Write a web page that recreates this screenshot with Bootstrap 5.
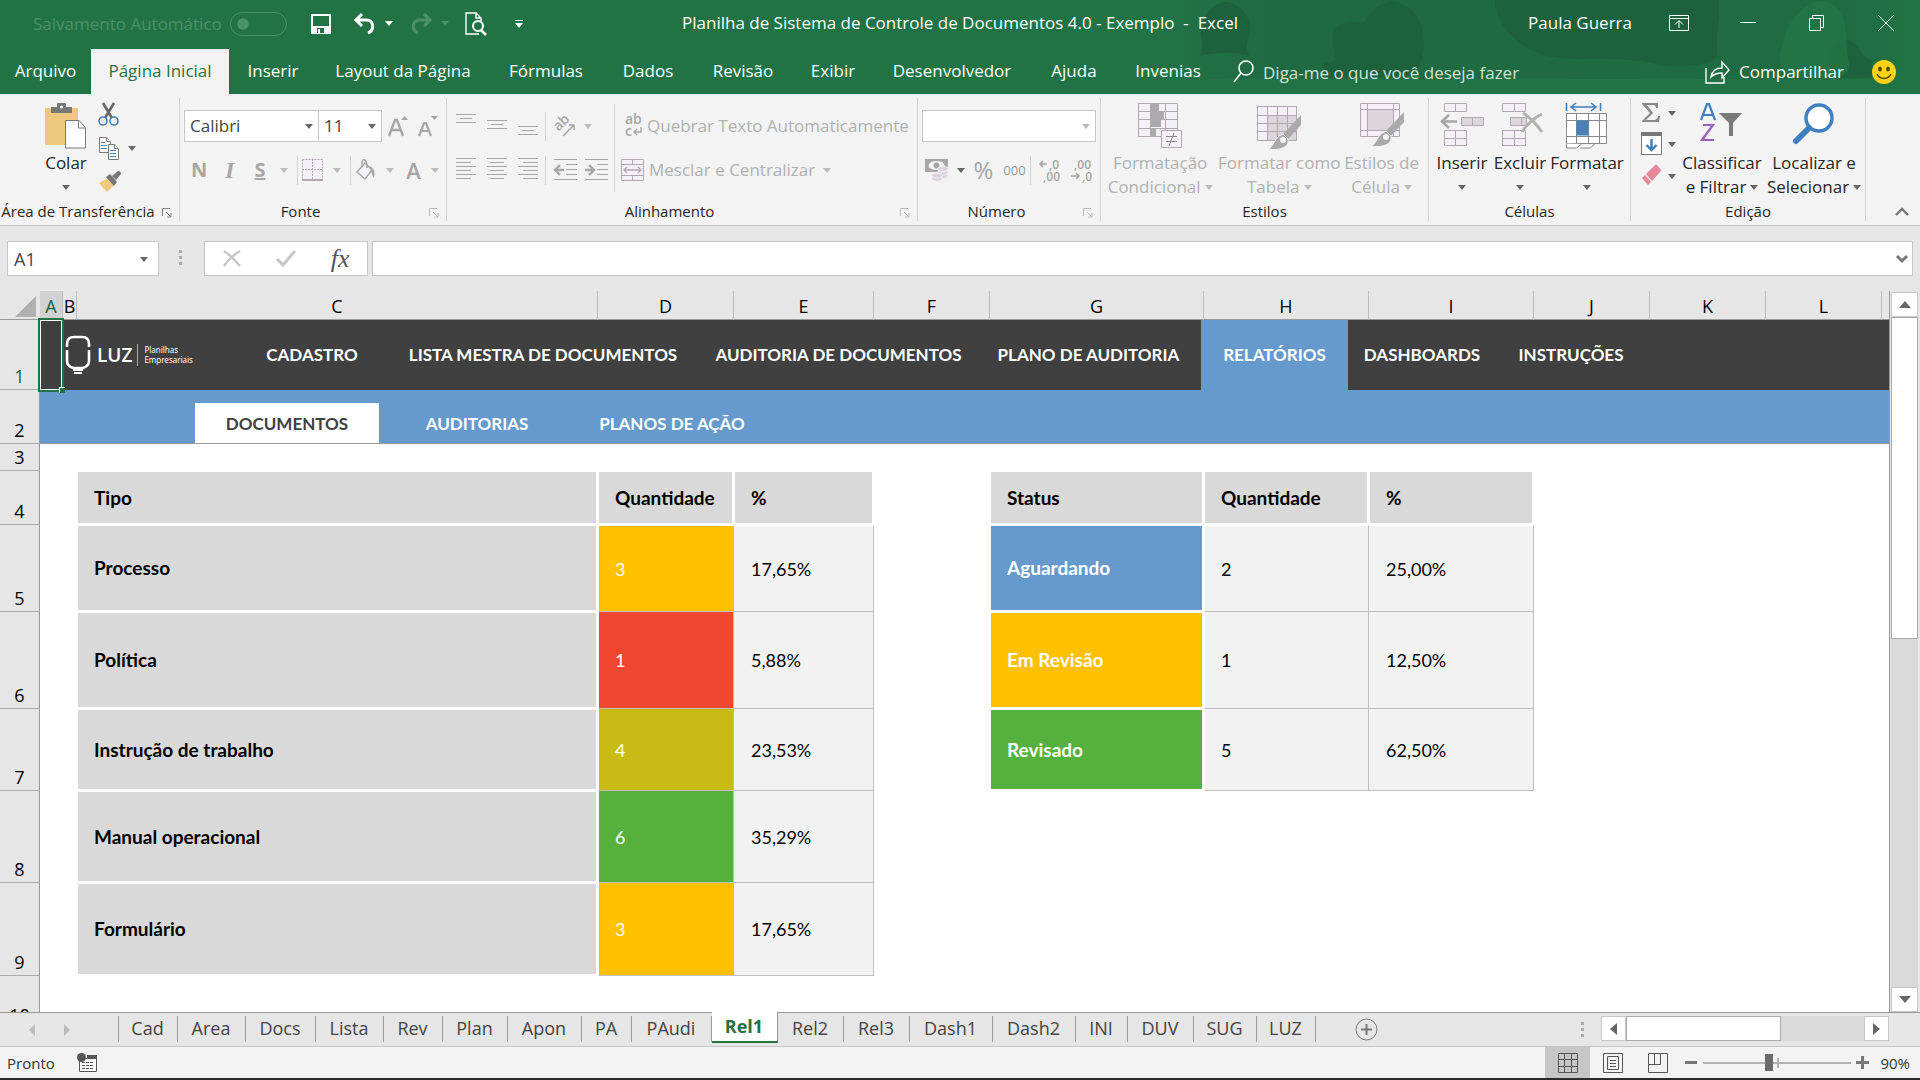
<!DOCTYPE html>
<html lang="pt-BR">
<head>
<meta charset="utf-8">
<meta name="viewport" content="width=device-width, initial-scale=1">
<title>Planilha de Sistema de Controle de Documentos 4.0 - Exemplo - Excel</title>
<link href="https://cdn.jsdelivr.net/npm/bootstrap@5.3.0/dist/css/bootstrap.min.css" rel="stylesheet">
<style>
:root{--xl:#217346;--chrome:#e6e6e6;--ribbon:#f3f3f3;--line:#c6c6c6;--grid:#999;--off:#b1b1b1;--blue:#6699cc}
body{font-family:"Open Sans","Noto Sans",sans-serif;font-size:17px;line-height:24px;color:#262626;background:var(--chrome)}
button,input,select{font-family:inherit}
svg{display:block;flex:none;overflow:visible}
a{text-decoration:none;color:inherit}
.plain{background:none;border:0;padding:0;color:inherit;display:flex;align-items:center;justify-content:center}
.caret{width:0;height:0;border:4px solid transparent;border-top:5px solid #666;border-bottom:0;display:inline-block;flex:none}
.dim{color:var(--off)}
.dim .caret,.caret.dim{border-top-color:#bbb}
.dim .caret.strong{border-top-color:#666}
.caret.white{border-top-color:#fff}
.caret.green{border-top-color:#4d9168}

/* title bar */
.top-area{background:var(--xl);color:#fff;position:relative}
.backdrop{position:absolute;right:0;top:0}
.title-row{height:49px;display:grid;grid-template-columns:1fr auto 1fr;position:relative}
.quick{padding:0 0 2px 33px}
.faded{color:#4d9168}
.switch-pill{appearance:none;width:57px;height:24px;border:1px solid #4d9168;border-radius:12px;margin:0;background:radial-gradient(circle at 12px 11px,#4d9168 5px,transparent 6px)}
.undo-btn{margin-left:22px}
.ribbon-opt{width:61px}
.win-btn{width:69px;height:40px}
.menu-row{height:45px;position:relative}
.menu-tabs{display:grid;grid-template-columns:91px 138px 88px 172px 114px 90px 100px 80px 158px 86px 102px}
.menu-tabs a{display:flex;align-items:center;justify-content:center;padding-bottom:1px}
.menu-tabs a.on{background:var(--ribbon);color:var(--xl)}
.ask-box{gap:9px;padding:2px 0 0 14px}
.ask{background:none;border:0;color:#d0e3d8;width:300px;padding:0;outline:0}
.ask::placeholder{color:#d0e3d8;opacity:1}
.smile{margin-left:28px}

/* ribbon */
.ribbon{height:132px;background:var(--ribbon);border-bottom:1px solid var(--line)}
.grp{position:relative;display:flex;flex-direction:column;padding-top:4px;border-right:1px solid #d2d2d2;margin:4px 0;flex:none}
.g-clip{width:180px}.g-font{width:267px}.g-align{width:471px}.g-num{width:183px}.g-style{width:328px}.g-cells{width:202px}.g-edit{width:235px}
.grp-main{height:98px;display:flex}
.grp-name{font-size:15px;line-height:20px;text-align:center;white-space:nowrap;padding-top:2px}
.grp-name.with-launch{padding-right:25px}
.g-clip .grp-name{width:156px}
.launch{position:absolute;right:7px;bottom:3px}
.big{flex-direction:column;justify-content:flex-start;white-space:nowrap}
.big .pic{height:49px;display:flex;align-items:flex-start;padding-top:1px}
.big .caret{margin-top:10px}
.big .lbl .caret{margin:0 0 3px 4px}
.w-58{width:58px}.w-76{width:76px}.w-86{width:86px}.w-92{width:92px}.w-120{width:120px}
.g-style .grp-main{padding-right:4px}
.paste{width:90px;padding-left:42px}
.clip-col{padding:1px 0 0 8px;gap:11px}
.edit-col{width:45px;padding:1px 0 0 10px;gap:9px}
.edit-col .plain{gap:6px;justify-content:flex-start}
.tool{width:31px;height:30px}
.slim{width:22px;height:30px;display:flex;align-items:center;justify-content:center}
.sep{width:1px;height:29px;background:#d2d2d2;flex:none}
.sep.tall{height:88px;margin-top:2px}
.tool-row{display:flex;align-items:center;height:46px;margin-top:1px}
.tool-row + .tool-row{height:42px;margin-top:0}
.indent-4{padding-left:4px}
.align-col{width:98px;padding-left:3px}
.turn-col{width:69px}
.wrap-col{padding-left:6px}
.pick{appearance:none;height:32px;border:1px solid var(--line);background:#fff url("data:image/svg+xml,%3Csvg xmlns='http://www.w3.org/2000/svg' width='8' height='5'%3E%3Cpath d='M0 0h8L4 5z' fill='%23666'/%3E%3C/svg%3E") no-repeat right 5px top 13px;border-radius:0;padding:0 5px;color:#444;font-size:17px;line-height:24px;outline:0}
.pick-font{width:135px}
.pick-size{width:64px;margin-left:-1px}
.pick-num{width:174px;background-image:url("data:image/svg+xml,%3Csvg xmlns='http://www.w3.org/2000/svg' width='8' height='5'%3E%3Cpath d='M0 0h8L4 5z' fill='%23bbb'/%3E%3C/svg%3E")}
.letter{font-weight:700;font-size:20px;color:#a6a6a6}
.letter.slanted{font-family:"Liberation Serif",serif;font-size:24px;font-style:italic}
.letter.colored{font-size:22px;font-weight:600}
.money{width:46px;gap:7px}
.percent{font-size:24px;color:#a6a6a6}
.zeros{font-size:13px;color:#999}
.collapse-btn{padding:0 11px 9px}

/* formula bar */
.fbar{height:65px;padding:15px 7px 0}
.name-box{height:35px;width:152px;padding-left:6px;font-size:18px;background-position:right 10px top 15px}
.fbox{height:35px;background:#fff;border:1px solid var(--line)}
.ftools{width:164px}
.finput{border:0;outline:0;background:none;height:33px}
.fx{font:italic 400 26px/24px "Liberation Serif",serif;color:#555}
.dots{width:3px;height:15px;background:repeating-linear-gradient(#aaa 0 3px,transparent 3px 6px)}
.fbar .dots{margin:9px 22px 0 20px}

/* sheet */
.sheet-area{flex:1 1 0;min-height:0}
.pane{overflow:hidden;min-width:0;border-right:1px solid var(--grid);background:#fff}
.sheet{table-layout:fixed;width:100%;border-collapse:separate;border-spacing:0;font-family:Lato,"Open Sans",sans-serif;font-size:18px;line-height:24px;color:#000}
.k-num{width:40px}.k-a{width:23px}.k-b{width:14px}.k-c{width:521px}.k-d{width:136px}.k-e{width:140px}.k-f{width:116px}.k-g{width:214px}.k-h{width:165px}
.sheet td,.sheet th{padding:0}
.sheet thead th{height:29px;padding-top:2px;background:var(--chrome);border-bottom:1px solid var(--grid);border-right:1px solid #bdbdbd;text-align:center;font-weight:400;font-family:"Open Sans",sans-serif;font-size:18px}
.sheet thead th.sel,.sheet tbody th.sel{background:#d2d2d2;color:#1c5f3a}
.sheet thead th:first-child,.sheet thead th:last-child{border-right:0}
.sheet tbody th.num{background:var(--chrome);border-right:1px solid var(--grid);border-bottom:1px solid #ababab;padding-bottom:2px;font-weight:400;text-align:center;vertical-align:bottom;font-family:"Open Sans",sans-serif;line-height:22px}
.r1{height:70px}.r2{height:54px}.r3{height:27px}.r5{height:87px}.r6{height:97px}.r7{height:82px}.r8{height:92px}.r9{height:93px}.r10{height:53px}
.sheet .hd,.sheet .kind{border:solid #fff;border-width:1px 2px 2px 1px;background:#d9d9d9;font-weight:700;font-size:19px;padding-left:16px;text-align:left}
.sheet .qty,.sheet .val,.sheet .cnt{border:solid #bfbfbf;border-width:0 1px 1px 0;background:#f2f2f2;padding-left:17px}
.sheet .qty{border-left:1px solid #fff;color:#fff;padding-left:16px}
.sheet .cnt{border-left:1px solid #fff;padding-left:16px}
.sheet .first{border-top:1px solid #fff}
.sheet .c-amber{background:#ffc000}.sheet .c-red{background:#f14730}.sheet .c-olive{background:#c8bc14}.sheet .c-green{background:#56b03e}.sheet .c-blue{background:var(--blue)}
.sheet .st{color:#fff}
.cell-a1{background:#404040;position:relative}
.cursor-box{position:absolute;left:-2px;top:-2px;right:-1px;bottom:-2px;border:2px solid var(--xl);outline:1px solid #fff;outline-offset:-3px;z-index:2}
.cursor-box::after{content:"";position:absolute;right:-3px;bottom:-3px;width:6px;height:6px;background:var(--xl);border:solid #fff;border-width:1px 0 0 1px}
.nav-dark{background:#404040;color:#fff;font-weight:700;font-size:17px}
.nav-main{display:grid;grid-template-columns:176px 146px 316px 275px 225px 147px 148px 150px;height:70px}
.nav-main a,.nav-sub a{display:flex;align-items:center;justify-content:center;white-space:nowrap}
.nav-main a.on{background:var(--blue)}
.sheet .nav-blue{background:var(--blue);color:#fff;font-weight:700;font-size:17px;border-bottom:1px solid var(--grid);vertical-align:bottom}
.nav-sub{display:grid;grid-template-columns:184px 196px 194px;height:40px;padding-left:155px}
.nav-sub a{padding-top:2px}
.nav-sub a.on{background:#fff;color:#404040}
.brand{gap:5px;padding-left:2px}
.brand-word{font-family:"Open Sans",sans-serif;font-weight:600;font-size:19px;line-height:22px}
.brand-sub{font-family:"Noto Sans","Open Sans",sans-serif;font-weight:400;font-size:8px;line-height:10px;border-left:1px solid #aaa;padding:1px 0 1px 6px}

/* scroll bars */
.vscroll{width:30px;flex:none;padding:1px 2px 0 1px}
.sb-btn{background:#fff;border:1px solid var(--line);width:100%;height:25px}
.sb-thumb{background:#fff;border:1px solid #ababab}
.vtrack{flex:1;background:#dadada}
.vtrack .sb-thumb{height:48%}
.hscroll{width:288px;height:25px;margin:3px 31px 0 17px}
.hscroll .sb-btn{width:25px}
.htrack{flex:1;background:#dadada}
.htrack .sb-thumb{width:65%;height:25px}

/* sheet tabs and status bar */
.tabs-row{height:35px;border-top:1px solid var(--grid);border-bottom:1px solid var(--line);font-size:18px;color:#444}
.tabs-row .dots{margin-top:9px}
.tab-prev{width:64px}
.tab-next{width:54px;justify-content:flex-start}
.add-tab{margin-left:39px}
.tabs{display:grid;grid-template-columns:59px 68px 70px 68px 59px 65px 74px 50px 80px 66px 66px 66px 83px 83px 52px 66px 63px 59px;border-left:1px solid var(--grid);height:26px;margin-top:3px}
.tabs a{display:flex;align-items:center;justify-content:center;border-right:1px solid var(--grid);padding:0 1px 2px 0;line-height:22px}
.tabs a.on{background:#fff;color:var(--xl);font-weight:700;margin:-4px 0 -1px;border-bottom:2px solid var(--xl);padding-bottom:1px}
.status{height:31px;background:var(--ribbon);font-size:15px;color:#333}
.ready{padding:0 22px 0 7px}
.view-side{padding-right:10px}
.view-btn{width:45px;height:31px}
.view-btn.on{background:#c6c6c6}
.zoom-out{margin:0 6px 0 5px}
.zoom-in{margin:0 11px 0 5px}
.zoomer{appearance:none;width:148px;height:18px;margin:0;background:linear-gradient(#b1b1b1,#b1b1b1) 0 8px/100% 2px no-repeat,linear-gradient(#b1b1b1,#b1b1b1) 74px 4px/2px 10px no-repeat}
.zoomer::-webkit-slider-thumb{appearance:none;width:8px;height:17px;background:#6b6b6b}
.taskline{height:2px;background:#2b2b2b}
</style>
</head>
<body class="vh-100 d-flex flex-column overflow-hidden">

<header class="top-area flex-shrink-0">
  <svg class="backdrop" width="760" height="79" viewBox="0 0 760 79">
    <defs><linearGradient id="fade"><stop offset="0" stop-color="#1f6a41" stop-opacity="0"/><stop offset=".16" stop-color="#1f6a41"/><stop offset=".9" stop-color="#206c42"/><stop offset="1" stop-color="#217346"/></linearGradient></defs>
    <rect width="760" height="79" fill="url(#fade)"/>
    <g fill="#1e623d">
      <path d="M40 56c6-12-2-18 2-32C46 8 60 2 66 2s22 6 24 24c1 14-8 18 0 30-12-4-36-4-50 0z"/>
      <path d="M176 60c-8-30-2-36 14-38 8 0 12 2 16-2 4-10 18-20 30-18 22 4 28 26 28 42s-6 26-14 34h-80c-4-6-8-10-8-14z"/>
      <path d="M335 0h224c2 18-4 36-2 50 4 16-30 18-60 14-40-10-90 0-116-10-24-8-46-30-46-54z"/>
      <path d="M668 64c-4-18 10-26 20-24 12 4 12 18 24 20v18h-32z"/>
    </g>
    <path d="M624 40c4-22 30-48 48-36s12 34 16 54-6 20-40 20-30-20-24-38z" fill="#237849" opacity=".7"/>
  </svg>
  <div class="title-row align-items-center">
    <div class="quick d-flex align-items-center">
      <label class="faded text-nowrap" for="autosave">Salvamento Automático</label>
      <input class="switch-pill ms-2" type="checkbox" id="autosave" disabled>
      <button class="plain ms-4" aria-label="Salvar"><svg width="20" height="20" fill="none"><path d="M1 1h18v18H1z" stroke="#fff" stroke-width="2"/><path d="M2 12h16v7H2z" fill="#f3f3f3"/><path d="M6 14h7v5H6z" fill="#217346"/><path d="M7 15h2v4H7z" fill="#fff"/></svg></button>
      <button class="plain undo-btn" aria-label="Desfazer"><svg width="24" height="22" fill="none" stroke="#fff" stroke-width="3"><path d="M9 1L3 7l6 6M3 7h10c8 0 9 10 2 13"/></svg></button>
      <span class="caret white ms-2"></span>
      <button class="plain ms-3" aria-label="Refazer"><svg width="24" height="22" fill="none" stroke="#4d9168" stroke-width="3"><path d="M15 1l6 6-6 6M21 7H11C3 7 2 17 9 20"/></svg></button>
      <span class="caret green ms-2"></span>
      <button class="plain ms-3" aria-label="Visualizar impressão"><svg width="22" height="24" fill="none" stroke="#fff" stroke-width="1.4"><path d="M16 9V6l-5-5H1v21h13M11 1v5h5"/><circle cx="13" cy="14" r="5" stroke-width="2"/><path d="M16 18l5 5" stroke-width="2.5"/></svg></button>
      <button class="plain ms-4" aria-label="Personalizar"><svg class="ms-1" width="8" height="8" fill="#fff"><path d="M0 0h8v1H0zM0 3h8L4 8z"/></svg></button>
    </div>
    <div class="text-nowrap pb-1">Planilha de Sistema de Controle de Documentos 4.0 - Exemplo &nbsp;-&nbsp; Excel</div>
    <div class="d-flex align-items-center justify-content-end pb-1">
      <span class="me-3">Paula Guerra</span>
      <button class="plain ribbon-opt" aria-label="Opções da faixa"><svg width="20" height="16" fill="none" stroke="#fff"><path d="M.5.5h19v15H.5zM.5 3.500h19M10 13V6M6 9.500l4-4 4 4"/></svg></button>
      <button class="plain win-btn ms-1" aria-label="Minimizar"><svg width="16" height="2"><path d="M0 0h16v1H0z" fill="#fff"/></svg></button>
      <button class="plain win-btn" aria-label="Restaurar"><svg width="16" height="16" fill="none" stroke="#fff"><path d="M.5 3.500h11v12H.5zM3.500 3V.5h11v12H12"/></svg></button>
      <button class="plain win-btn" aria-label="Fechar"><svg width="16" height="16" stroke="#fff"><path d="M0 0l16 16M16 0L0 16"/></svg></button>
    </div>
  </div>
  <div class="menu-row d-flex">
    <nav class="menu-tabs text-nowrap">
      <a href="#">Arquivo</a><a href="#" class="on">Página Inicial</a><a href="#">Inserir</a><a href="#">Layout da Página</a><a href="#">Fórmulas</a><a href="#">Dados</a><a href="#">Revisão</a><a href="#">Exibir</a><a href="#">Desenvolvedor</a><a href="#">Ajuda</a><a href="#">Invenias</a>
    </nav>
    <label class="ask-box d-flex align-items-center"><svg width="21" height="23" fill="none" stroke="#fff" stroke-width="1.600"><circle cx="13" cy="7" r="7"/><path d="M8 12l-7 9"/></svg><input class="ask" type="text" placeholder="Diga-me o que você deseja fazer" aria-label="Diga-me"></label>
    <div class="ms-auto d-flex align-items-center pe-4">
      <button class="plain gap-2"><svg width="26" height="24" fill="none" stroke="#fff" stroke-width="1.400"><path d="M1 8v15h18v-6M6 17c1-6 5-9 11-9V2l7 8-7 8v-5c-5 0-8 1-11 4z"/></svg><span>Compartilhar</span></button>
      <svg class="smile" width="24" height="24"><circle cx="12" cy="12" r="12" fill="#fcd116"/><ellipse cx="8" cy="9" rx="1.800" ry="2.500" fill="#4a4200"/><ellipse cx="16" cy="9" rx="1.800" ry="2.500" fill="#4a4200"/><path d="M5 14c3 6 11 6 14 0" fill="none" stroke="#4a4200" stroke-width="1.500"/></svg>
    </div>
  </div>
</header>

<section class="ribbon d-flex flex-shrink-0" aria-label="Página Inicial">
  <div class="grp g-clip">
    <div class="grp-main">
      <button class="plain big paste"><span class="pic"><svg width="42" height="46"><path d="M0 5h33v37H0z" fill="#edc87e"/><path d="M6 4h6V1q0-1 1-1h7q1 0 1 1v3h6v6H6z" fill="#777"/><circle cx="16.500" cy="4" r="1.500" fill="#fff"/><path d="M20.500 17.500H34l6.500 7v20.500h-20z" fill="#fff" stroke="#777"/><path d="M33.500 18v7H40" fill="none" stroke="#777"/></svg></span><span>Colar</span><span class="caret"></span></button>
      <div class="clip-col d-flex flex-column">
        <button class="plain justify-content-start" aria-label="Recortar"><svg width="21" height="23" fill="none"><path d="M5 0l9 15M16 0L7 15" stroke="#666" stroke-width="2.600"/><circle cx="5" cy="18" r="4" stroke="#4a80b8" stroke-width="1.600"/><circle cx="16" cy="18" r="4" stroke="#4a80b8" stroke-width="1.600"/></svg></button>
        <button class="plain justify-content-start" aria-label="Copiar"><svg width="22" height="23" fill="#fff" stroke="#777"><path d="M1.500.5h7l4 4v11h-11z"/><path d="M8.500.5v4h4" /><path d="M3 5.500h4M3 8.500h6M3 11.500h6" stroke="#4a80b8"/><path d="M10.500 7.500h6l4 4v11h-10z"/><path d="M16.500 7.500v4h4"/><path d="M12 13.500h6M12 16.500h6M12 19.500h6" stroke="#4a80b8"/></svg><span class="caret ms-2"></span></button>
        <button class="plain justify-content-start" aria-label="Pincel"><svg width="24" height="21"><path d="M1 12l9-5 6 7-7 7z" fill="#edc87e"/><path d="M8 6l4-3 7 8-3 4zM14 5l6-5q3 0 3 3l-5 6z" fill="#777"/></svg></button>
      </div>
    </div>
    <div class="grp-name">Área de Transferência</div>
    <svg class="launch" width="10" height="10" fill="none" stroke="#888"><path d="M.5 8V.5H8M4 4l5 5M9 5v4H5"/></svg>
  </div>

  <div class="grp g-font">
    <div class="grp-main flex-column">
      <div class="tool-row indent-4">
        <select class="pick pick-font" aria-label="Fonte"><option>Calibri</option></select>
        <select class="pick pick-size" aria-label="Tamanho da fonte"><option>11</option></select>
        <button class="plain tool" aria-label="Aumentar fonte"><svg width="20" height="21" fill="none"><path d="M1 20L7 4h2l6 16M3 14h10" stroke="#a6a6a6" stroke-width="2.400"/><path d="M13 4h7l-3.500-4z" fill="#a6a6a6"/></svg></button>
        <button class="plain tool" aria-label="Reduzir fonte"><svg width="20" height="21" fill="none"><path d="M0 20L5 7h2l5 13M2 15h8" stroke="#a6a6a6" stroke-width="2.200"/><path d="M12 0h7l-3.500 4z" fill="#a6a6a6"/></svg></button>
      </div>
      <div class="tool-row indent-4">
        <button class="plain tool letter">N</button><button class="plain tool letter slanted">I</button><button class="plain tool letter text-decoration-underline">S</button>
        <span class="slim"><i class="caret dim me-1"></i></span><span class="sep"></span>
        <button class="plain tool" aria-label="Bordas"><svg width="22" height="22" fill="none" stroke="#b1a8b1"><path d="M.5.5h20v20H.5z" fill="#f5eff7" stroke-dasharray="2 1"/><path d="M10.500 0v20M0 10.500h20" stroke-dasharray="2 1"/><path d="M0 21h21" stroke-width="2"/></svg></button>
        <span class="slim"><i class="caret dim me-1"></i></span><span class="sep"></span>
        <button class="plain tool" aria-label="Cor de preenchimento"><svg width="20" height="22" fill="none"><path d="M9 4L1 13l8 7 7-9z" fill="#f7f1f9" stroke="#a6a6a6" stroke-width="1.500"/><path d="M6 8V3q0-3 3-2 2 1 2 8" stroke="#a6a6a6" stroke-width="1.500"/><path d="M14 7q6 3 4 12-2-2-3-7z" fill="#a6a6a6"/></svg></button>
        <span class="slim"><i class="caret dim me-1"></i></span>
        <button class="plain slim letter colored">A</button>
        <span class="slim"><i class="caret dim"></i></span>
      </div>
    </div>
    <div class="grp-name with-launch">Fonte</div>
    <svg class="launch" width="10" height="10" fill="none" stroke="#bbb"><path d="M.5 8V.5H8M4 4l5 5M9 5v4H5"/></svg>
  </div>

  <div class="grp g-align">
    <div class="grp-main dim">
      <div class="align-col">
        <div class="tool-row">
          <button class="plain tool" aria-label="Alinhar em cima"><svg width="20" height="24" stroke="#a6a6a6"><path d="M0 .5h20M4 4.500h12M0 8.500h20"/></svg></button>
          <button class="plain tool" aria-label="Alinhar no meio"><svg width="20" height="24" stroke="#a6a6a6"><path d="M0 6.500h20M4 10.500h12M0 14.500h20"/></svg></button>
          <button class="plain tool" aria-label="Alinhar embaixo"><svg width="20" height="24" stroke="#a6a6a6"><path d="M0 12.500h20M4 16.500h12M0 20.500h20"/></svg></button>
        </div>
        <div class="tool-row">
          <button class="plain tool" aria-label="Esquerda"><svg width="20" height="24" stroke="#a6a6a6"><path d="M0 .5h20M0 4.500h15M0 8.500h20M0 12.500h15M0 16.500h20M0 20.500h15"/></svg></button>
          <button class="plain tool" aria-label="Centro"><svg width="20" height="24" stroke="#a6a6a6"><path d="M0 .5h20M3 4.500h14M0 8.500h20M3 12.500h14M0 16.500h20M3 20.500h14"/></svg></button>
          <button class="plain tool" aria-label="Direita"><svg width="20" height="24" stroke="#a6a6a6"><path d="M0 .5h20M5 4.500h15M0 8.500h20M5 12.500h15M0 16.500h20M5 20.500h15"/></svg></button>
        </div>
      </div>
      <div class="turn-col">
        <div class="tool-row"><span class="sep"></span><button class="plain gap-2 ps-2" aria-label="Orientação"><svg width="22" height="20" fill="none" stroke="#a6a6a6"><text x="1" y="13" transform="rotate(-45 6 10)" fill="#a6a6a6" stroke="none" font-size="14" font-weight="600">ab</text><path d="M9 20L20 9M15 9h5v5" stroke-width="1.500"/></svg><i class="caret"></i></button></div>
        <div class="tool-row"><span class="sep"></span>
          <button class="plain tool ms-1" aria-label="Diminuir recuo"><svg width="23" height="22" fill="none" stroke="#a6a6a6"><path d="M0 .5h23M12 5.500h11M12 10.500h11M12 15.500h11M0 20.500h23"/><path d="M10 11H2M6 6l-5 5 5 5" stroke-width="2.400"/></svg></button>
          <button class="plain tool" aria-label="Aumentar recuo"><svg width="23" height="22" fill="none" stroke="#a6a6a6"><path d="M0 .5h23M12 5.500h11M12 10.500h11M12 15.500h11M0 20.500h23"/><path d="M0 11h8M4 6l5 5-5 5" stroke-width="2.400"/></svg></button>
        </div>
      </div>
      <span class="sep tall"></span>
      <div class="wrap-col">
        <div class="tool-row"><button class="plain text-nowrap"><svg class="mx-1" width="18" height="24" fill="#a6a6a6"><text x="0" y="10" font-size="14" font-weight="600">ab</text><text x="0" y="22" font-size="14" font-weight="600">c</text><path d="M16 13v5h-6M12 15l-3 3 3 3" fill="none" stroke="#a6a6a6" stroke-width="1.300"/></svg><span>Quebrar Texto Automaticamente</span></button></div>
        <div class="tool-row"><button class="plain text-nowrap"><svg width="24" height="23" fill="#f5eff7" stroke="#b1a8b1"><path d="M.5.5h22v21H.5zM.5 5.500h22M.5 16.500h22M11.500.5v5M11.500 16.500v5"/><path d="M3 11h17M6 8l-3 3 3 3M17 8l3 3-3 3" fill="none" stroke-width="1.300"/></svg><span class="ps-1">Mesclar e Centralizar</span><i class="caret ms-2"></i></button></div>
      </div>
    </div>
    <div class="grp-name with-launch">Alinhamento</div>
    <svg class="launch" width="10" height="10" fill="none" stroke="#bbb"><path d="M.5 8V.5H8M4 4l5 5M9 5v4H5"/></svg>
  </div>

  <div class="grp g-num">
    <div class="grp-main indent-4 flex-column">
      <div class="tool-row"><select class="pick pick-num" aria-label="Formato de número"><option></option></select></div>
      <div class="tool-row dim">
        <button class="plain money" aria-label="Moeda"><svg width="25" height="24" fill="#a6a6a6"><path d="M0 1h23v13H0z"/><ellipse cx="11.500" cy="7.500" rx="8" ry="4.500" fill="#f3f3f3"/><circle cx="11.500" cy="7.500" r="3"/><g fill="#ddd3dd" stroke="#f3f3f3"><ellipse cx="18" cy="18" rx="5.500" ry="2.500"/><ellipse cx="18" cy="14.500" rx="5.500" ry="2.500"/><ellipse cx="18" cy="11" rx="5.500" ry="2.500"/><ellipse cx="12" cy="21" rx="5.500" ry="2.500"/><ellipse cx="12" cy="17.500" rx="5.500" ry="2.500"/></g></svg><span class="caret strong"></span></button>
        <button class="plain tool percent">%</button>
        <button class="plain tool zeros">000</button>
        <span class="sep"></span>
        <button class="plain tool ms-1" aria-label="Aumentar casas"><svg width="24" height="24" fill="#a6a6a6"><text x="10" y="11" font-size="12" font-weight="600">,0</text><text x="4" y="23" font-size="12" font-weight="600">,00</text><path d="M8 6H1M4 3L1 6l3 3" fill="none" stroke="#a6a6a6" stroke-width="1.600"/></svg></button>
        <button class="plain tool" aria-label="Diminuir casas"><svg width="24" height="24" fill="#a6a6a6"><text x="4" y="11" font-size="12" font-weight="600">,00</text><text x="12" y="23" font-size="12" font-weight="600">,0</text><path d="M1 18h8M6 15l3 3-3 3" fill="none" stroke="#a6a6a6" stroke-width="1.600"/></svg></button>
      </div>
    </div>
    <div class="grp-name with-launch">Número</div>
    <svg class="launch" width="10" height="10" fill="none" stroke="#bbb"><path d="M.5 8V.5H8M4 4l5 5M9 5v4H5"/></svg>
  </div>

  <div class="grp g-style">
    <div class="grp-main dim">
      <button class="plain big w-120"><span class="pic"><svg width="44" height="46"><path d="M.5.5h39v33H.5z" fill="#f5eff7" stroke="#b1a8b1"/><path d="M12 0h9v8h-9zM12 9h14v7H12zM12 17h11v7H12zM12 25h6v8h-6z" fill="#ababab"/><path d="M0 8.500h40M0 16.500h40M0 25.500h40M12.500 0v34M27.500 0v34" stroke="#b1a8b1" fill="none"/><path d="M23.500 27.500h20v17h-20z" fill="#f5eff7" stroke="#b1a8b1"/><path d="M28 33.500h11M28 38.500h11M36 30l-5 13" stroke="#888"/></svg></span><span>Formatação</span><span class="lbl">Condicional<i class="caret"></i></span></button>
      <button class="plain big w-120"><span class="pic"><svg width="44" height="46"><path d="M.5 3.500h39v34H.5z" fill="#f5eff7" stroke="#b1a8b1"/><path d="M10 12h29v25H10z" fill="#dcd5dc"/><path d="M0 12.500h40M0 20.500h40M0 28.500h40M10.500 3v34M20.500 3v34M30.500 3v34" stroke="#b1a8b1"/><path d="M44 12v10L31 36l-5-5z" fill="#aaa"/><path d="M26 31l5 5c2 8-8 12-20 10 6-2 6-12 15-15z" fill="#aaa" stroke="#f3f3f3"/><circle cx="26" cy="37" r="3" fill="#f3f3f3"/></svg></span><span>Formatar como</span><span class="lbl">Tabela<i class="caret"></i></span></button>
      <button class="plain big w-86"><span class="pic"><svg width="44" height="46"><path d="M.5.5h39v33H.5z" fill="#f5eff7" stroke="#b1a8b1"/><path d="M7 7h26v20H7z" fill="#dcd5dc"/><path d="M0 6.500h40M0 27.500h40M7.500 0v34M33.500 0v34" stroke="#b1a8b1"/><path d="M44 9v10L31 33l-5-5z" fill="#aaa"/><path d="M26 28l5 5c2 8-8 12-20 10 6-2 6-12 15-15z" fill="#aaa" stroke="#f3f3f3"/><circle cx="26" cy="34" r="3" fill="#f3f3f3"/></svg></span><span>Estilos de</span><span class="lbl">Célula<i class="caret"></i></span></button>
    </div>
    <div class="grp-name">Estilos</div>
  </div>

  <div class="grp g-cells">
    <div class="grp-main indent-4">
      <button class="plain big w-58"><span class="pic"><svg width="44" height="46" fill="#f5eff7" stroke="#b1a8b1"><path d="M4.500.5h22v8h-22zM15.500.5v8M4.500 27.500h22v15h-22zM15.500 27.500v15M4.500 35.500h22"/><path d="M21.500 14.500h22v8h-22zM32.500 14.500v8" fill="#dcd5dc"/><path d="M17 18.500H3M9 12l-7 6.500L9 25" fill="none" stroke="#a6a6a6" stroke-width="2.600"/></svg></span><span>Inserir</span><span class="caret"></span></button>
      <button class="plain big w-58"><span class="pic"><svg width="44" height="46" fill="#f5eff7" stroke="#b1a8b1"><path d="M4.500.500h23v8H4.500zM16.500.5v8M4.500 27.500h23v15H4.500zM16.500 27.500v15M4.500 35.500h23"/><path d="M12.500 14.500h16v8h-16zM23.500 14.500v8" fill="#dcd5dc"/><path d="M25 10c8 5 14 12 19 19M44 11c-8 4-15 10-20 18" fill="none" stroke="#b1b1b1" stroke-width="3"/></svg></span><span>Excluir</span><span class="caret"></span></button>
      <button class="plain big w-76"><span class="pic"><svg width="42" height="46" fill="#fff" stroke="#888"><path d="M.5 10.500h40v30H.5zM.5 17.500h40M.5 33.500h40M10.500 10.500v30M22.500 10.500v30M33.500 10.500v30"/><path d="M.5 40.500V45h10l5-4M14.500 45h10l4-4" /><path d="M10.500 17.500h12v15h-12z" fill="#4a80b8" stroke="none"/><path d="M.5 0v8M34.500 0v8M5 4h25M10 0L5 4l5 4M25 0l5 4-5 4" stroke="#3f7fbf" fill="none" stroke-width="1.600"/></svg></span><span>Formatar</span><span class="caret"></span></button>
    </div>
    <div class="grp-name">Células</div>
  </div>

  <div class="grp g-edit">
    <div class="grp-main">
      <div class="edit-col d-flex flex-column">
        <button class="plain" aria-label="AutoSoma"><svg width="21" height="20"><path d="M1 0h16v5h-2q0-3-3-3H6l6 8-7 7h8q3 0 4-4h2l-1 6H1v-1l8-8-8-9z" fill="#8a8a8a"/></svg><span class="caret"></span></button>
        <button class="plain" aria-label="Preencher"><svg width="21" height="24"><path d="M.5.5h20v22H.5z" fill="#fff" stroke="#777"/><path d="M0 0h21v4H0z" fill="#777"/><path d="M10.500 7v11M5.500 13l5 5 5-5" fill="none" stroke="#3f7fbf" stroke-width="2.400"/></svg><span class="caret"></span></button>
        <button class="plain" aria-label="Limpar"><svg width="21" height="22"><path d="M5 9L14 0q1-1 2 0l4 5q0 1-1 2l-8 9zM4 10l6 7-2 2q-1 1-2 0l-5-6z" fill="#e8879c"/></svg><span class="caret"></span></button>
      </div>
      <button class="plain big w-92"><span class="pic"><svg width="44" height="40" fill="none"><path d="M1 17L7 1h2l6 16M3 12h10" stroke="#3f7fbf" stroke-width="2.200"/><path d="M3 22h10L2 37h12" stroke="#9a5fb8" stroke-width="2.200"/><path d="M19 10h23l-9 10v13h-4V20z" fill="#7a7a7a"/></svg></span><span>Classificar</span><span class="lbl">e Filtrar<i class="caret"></i></span></button>
      <button class="plain big w-92"><span class="pic"><svg width="42" height="42" fill="none" stroke="#3f7fbf"><circle cx="26" cy="15" r="13" fill="#fff" stroke-width="3.400"/><path d="M16 25L3 38" stroke-width="6" stroke-linecap="round"/></svg></span><span>Localizar e</span><span class="lbl">Selecionar<i class="caret"></i></span></button>
    </div>
    <div class="grp-name">Edição</div>
  </div>
  <button class="plain collapse-btn ms-auto align-self-end" aria-label="Recolher"><svg width="14" height="9" fill="none" stroke="#777" stroke-width="2.400"><path d="M1 8l6-6 6 6"/></svg></button>
</section>

<section class="fbar d-flex flex-shrink-0" aria-label="Barra de fórmulas">
  <select class="pick name-box" aria-label="Caixa de nome"><option>A1</option></select>
  <span class="dots"></span>
  <div class="fbox ftools d-flex justify-content-around">
    <button class="plain" aria-label="Cancelar"><svg width="18" height="17" fill="none" stroke="#c6c6c6" stroke-width="2.400"><path d="M1 1c6 4 11 9 16 15M17 1C10 5 5 10 1 16"/></svg></button>
    <button class="plain" aria-label="Inserir"><svg width="20" height="17" fill="none" stroke="#c6c6c6" stroke-width="3"><path d="M1 9l6 6L19 1"/></svg></button>
    <button class="plain fx">fx</button>
  </div>
  <div class="fbox d-flex flex-grow-1 ms-1">
    <input class="finput flex-grow-1" type="text" aria-label="Fórmula">
    <button class="plain pe-1" aria-label="Expandir"><svg width="12" height="8" fill="none" stroke="#777" stroke-width="3"><path d="M1 1l5 5 5-5"/></svg></button>
  </div>
</section>

<main class="sheet-area d-flex">
  <div class="pane flex-grow-1">
  <table class="sheet">
    <colgroup><col class="k-num"><col class="k-a"><col class="k-b"><col class="k-c"><col class="k-d"><col class="k-e"><col class="k-f"><col class="k-g"><col class="k-h"><col class="k-h"><col class="k-f"><col class="k-f"><col class="k-f"><col></colgroup>
    <thead><tr><th aria-label="Selecionar tudo"><svg class="ms-auto me-1" width="21" height="21"><path d="M21 0v21H0z" fill="#b1b1b1"/></svg></th><th class="sel">A</th><th>B</th><th>C</th><th>D</th><th>E</th><th>F</th><th>G</th><th>H</th><th>I</th><th>J</th><th>K</th><th>L</th><th></th></tr></thead>
    <tbody>
    <tr class="r1"><th class="num sel">1</th><td class="cell-a1"><div class="cursor-box"></div></td>
      <td colspan="12" class="nav-dark"><nav class="nav-main">
        <div class="brand d-flex align-items-center">
          <svg width="27" height="40" fill="none" stroke="#fff" stroke-width="2.600"><path d="M2 12V9q0-7 7-7h8q7 0 7 7v3M2 15v11q0 5 6 7h10q6-2 6-7V15"/><path d="M8 35h10M9 38h8" stroke-width="2"/></svg>
          <span class="brand-word">LUZ</span><span class="brand-sub">Planilhas<br>Empresariais</span></div>
        <a href="#">CADASTRO</a><a href="#">LISTA MESTRA DE DOCUMENTOS</a><a href="#">AUDITORIA DE DOCUMENTOS</a><a href="#">PLANO DE AUDITORIA</a><a href="#" class="on">RELATÓRIOS</a><a href="#">DASHBOARDS</a><a href="#">INSTRUÇÕES</a>
      </nav></td></tr>
    <tr class="r2"><th class="num">2</th><td colspan="13" class="nav-blue"><nav class="nav-sub"><a href="#" class="on">DOCUMENTOS</a><a href="#">AUDITORIAS</a><a href="#">PLANOS DE AÇÃO</a></nav></td></tr>
    <tr class="r3"><th class="num">3</th><td colspan="13"></td></tr>
    <tr class="r2"><th class="num">4</th><td></td><td></td><td class="hd">Tipo</td><td class="hd">Quantidade</td><td class="hd">%</td><td></td><td class="hd">Status</td><td class="hd">Quantidade</td><td class="hd">%</td><td colspan="4"></td></tr>
    <tr class="r5"><th class="num">5</th><td></td><td></td><td class="kind">Processo</td><td class="qty first c-amber">3</td><td class="val first">17,65%</td><td></td><td class="kind st c-blue">Aguardando</td><td class="cnt first">2</td><td class="val first">25,00%</td><td colspan="4"></td></tr>
    <tr class="r6"><th class="num">6</th><td></td><td></td><td class="kind">Política</td><td class="qty c-red">1</td><td class="val">5,88%</td><td></td><td class="kind st c-amber">Em Revisão</td><td class="cnt">1</td><td class="val">12,50%</td><td colspan="4"></td></tr>
    <tr class="r7"><th class="num">7</th><td></td><td></td><td class="kind">Instrução de trabalho</td><td class="qty c-olive">4</td><td class="val">23,53%</td><td></td><td class="kind st c-green">Revisado</td><td class="cnt">5</td><td class="val">62,50%</td><td colspan="4"></td></tr>
    <tr class="r8"><th class="num">8</th><td></td><td></td><td class="kind">Manual operacional</td><td class="qty c-green">6</td><td class="val">35,29%</td><td colspan="8"></td></tr>
    <tr class="r9"><th class="num">9</th><td></td><td></td><td class="kind">Formulário</td><td class="qty c-amber">3</td><td class="val">17,65%</td><td colspan="8"></td></tr>
    <tr class="r10"><th class="num">10</th><td colspan="13"></td></tr>
    </tbody>
  </table>
  </div>
  <div class="vscroll d-flex flex-column">
    <button class="plain sb-btn" aria-label="Subir"><svg width="12" height="7"><path d="M0 7h12L6 0z" fill="#666"/></svg></button>
    <div class="vtrack"><div class="sb-thumb"></div></div>
    <button class="plain sb-btn" aria-label="Descer"><svg width="12" height="7"><path d="M0 0h12L6 7z" fill="#666"/></svg></button>
  </div>
</main>

<div class="tabs-row d-flex flex-shrink-0">
  <button class="plain tab-prev" aria-label="Anterior"><svg width="6" height="12"><path d="M6 0v12L0 6z" fill="#bbb"/></svg></button>
  <button class="plain tab-next" aria-label="Próxima"><svg width="6" height="12"><path d="M0 0v12l6-6z" fill="#bbb"/></svg></button>
  <nav class="tabs">
    <a href="#">Cad</a><a href="#">Area</a><a href="#">Docs</a><a href="#">Lista</a><a href="#">Rev</a><a href="#">Plan</a><a href="#">Apon</a><a href="#">PA</a><a href="#">PAudi</a><a href="#" class="on">Rel1</a><a href="#">Rel2</a><a href="#">Rel3</a><a href="#">Dash1</a><a href="#">Dash2</a><a href="#">INI</a><a href="#">DUV</a><a href="#">SUG</a><a href="#">LUZ</a>
  </nav>
  <button class="plain add-tab" aria-label="Nova planilha"><svg width="23" height="23" fill="none" stroke="#777"><circle cx="11.500" cy="11.500" r="10.500"/><path d="M11.500 6v11M6 11.500h11" stroke-width="2"/></svg></button>
  <span class="dots ms-auto"></span>
  <div class="hscroll d-flex">
    <button class="plain sb-btn" aria-label="Esquerda"><svg width="7" height="12"><path d="M7 0v12L0 6z" fill="#666"/></svg></button>
    <div class="htrack"><div class="sb-thumb"></div></div>
    <button class="plain sb-btn" aria-label="Direita"><svg width="7" height="12"><path d="M0 0v12l7-6z" fill="#666"/></svg></button>
  </div>
</div>

<footer class="status d-flex align-items-center flex-shrink-0">
  <span class="ready">Pronto</span>
  <svg width="21" height="20" fill="none" stroke="#555"><path d="M2.500 5.500h17v13h-17z" fill="#fff"/><path d="M10 2h10v4H10z" fill="#555" stroke="none"/><path d="M5 9.500h12M5 12.500h12M5 15.500h12" stroke-dasharray="3 1"/><circle cx="4.500" cy="4.500" r="4.500" fill="#555" stroke="none"/></svg>
  <div class="view-side ms-auto d-flex align-items-center">
    <button class="plain view-btn on" aria-label="Normal"><svg width="20" height="20" fill="none" stroke="#555"><path d="M.5.5h19v19H.5zM.5 6.500h19M.5 13.500h19M6.500.5v19M13.500.5v19"/></svg></button>
    <button class="plain view-btn" aria-label="Layout da página"><svg width="20" height="20" fill="none" stroke="#555"><path d="M.5.500h19v19H.5zM4.500 3.500h11v13h-11zM7 7.500h6M7 10.500h6M7 13.500h6"/></svg></button>
    <button class="plain view-btn" aria-label="Quebra de página"><svg width="20" height="20" fill="none" stroke="#555"><path d="M.5.5h19v19H.5zM.5 11.500h12V.5M6.500.5v11"/></svg></button>
    <button class="plain zoom-out" aria-label="Menos zoom"><svg width="12" height="3"><path d="M0 0h12v3H0z" fill="#777"/></svg></button>
    <input class="zoomer" type="range" min="10" max="200" value="93" aria-label="Zoom">
    <button class="plain zoom-in" aria-label="Mais zoom"><svg width="13" height="13"><path d="M0 5h13v3H0zM5 0h3v13H5z" fill="#777"/></svg></button>
    <span>90%</span>
  </div>
</footer>
<div class="taskline flex-shrink-0"></div>

<script src="https://cdn.jsdelivr.net/npm/bootstrap@5.3.0/dist/js/bootstrap.bundle.min.js"></script>
</body>
</html>
